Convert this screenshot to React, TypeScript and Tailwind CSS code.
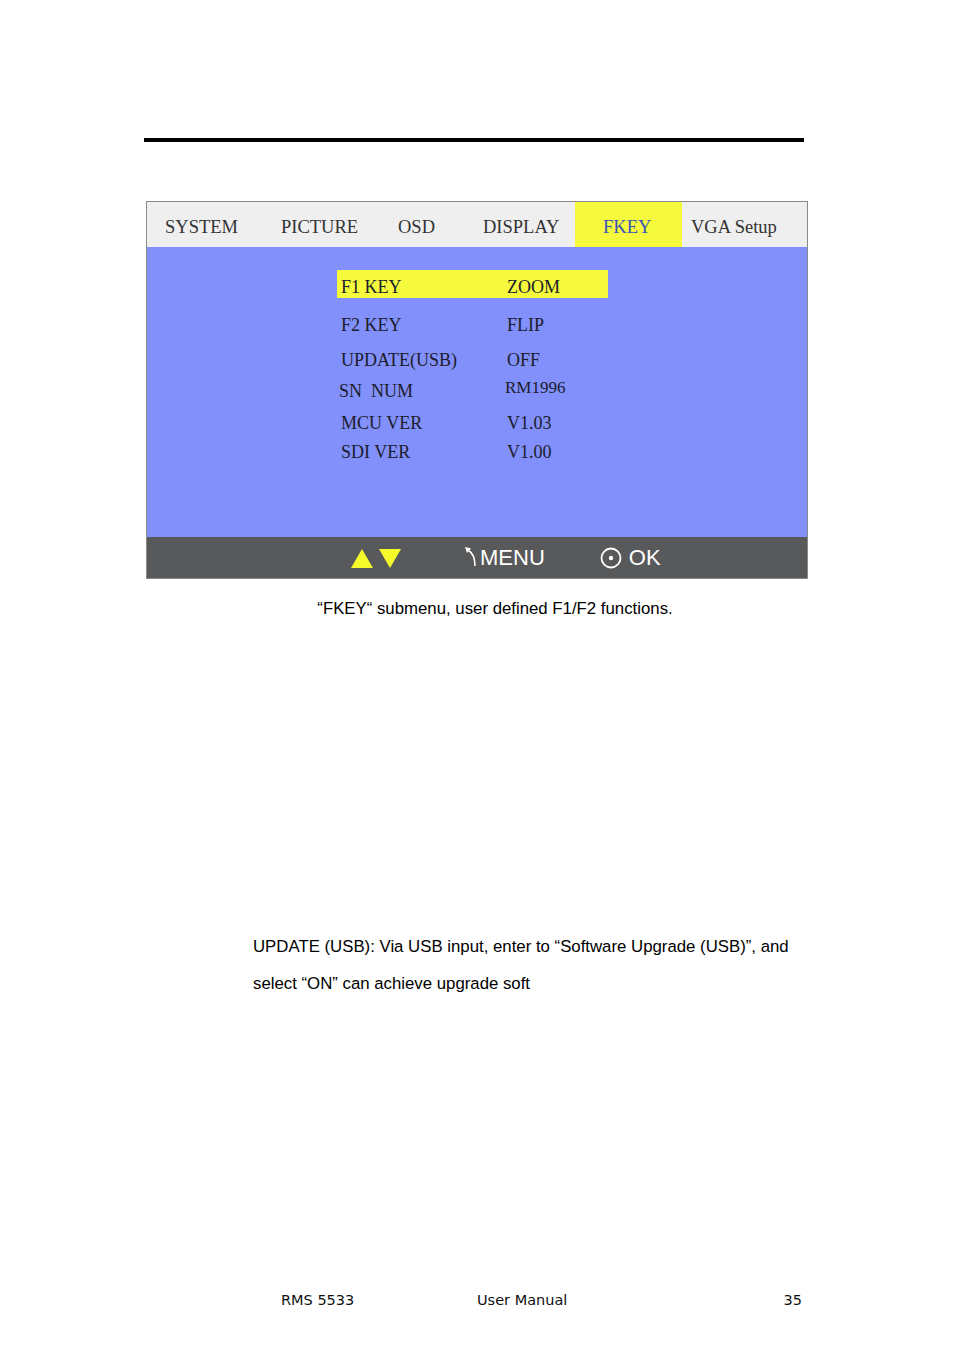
const tabs = [
  { label: 'SYSTEM', w: 'w-[118px]', pad: 'pl-[18px]' },
  { label: 'PICTURE', w: 'w-[119px]', pad: 'pl-[16px]' },
  { label: 'OSD', w: 'w-[82px]', pad: 'pl-[14px]' },
  { label: 'DISPLAY', w: 'w-[109px]', pad: 'pl-[17px]' },
]

const rows = [
  { k: 'F1 KEY', v: 'ZOOM', mt: 'mt-0', active: true },
  { k: 'F2 KEY', v: 'FLIP', mt: 'mt-[10px]' },
  { k: 'UPDATE(USB)', v: 'OFF', mt: 'mt-[7px]' },
  { k: 'SN\u00a0\u00a0NUM', v: 'RM1996', mt: 'mt-[3px]', shift: true },
  { k: 'MCU VER', v: 'V1.03', mt: 'mt-[4px]' },
  { k: 'SDI VER', v: 'V1.00', mt: 'mt-[1px]' },
]

function MenuArrow() {
  return (
    <svg width="14" height="22" viewBox="0 0 14 22" className="mb-[2px]">
      <path d="M11 20 C11 12 9 7 4 4" fill="none" stroke="white" strokeWidth="1.6" />
      <path d="M1 1 L7 2.5 L3 7 Z" fill="white" />
    </svg>
  )
}

function OkIcon() {
  return (
    <svg width="22" height="22" viewBox="0 0 22 22">
      <circle cx="11" cy="11" r="9.5" fill="none" stroke="white" strokeWidth="1.8" />
      <circle cx="11" cy="11" r="2.2" fill="white" />
    </svg>
  )
}

export default function App() {
  return (
    <div className="w-[954px] h-[1350px] bg-white flex flex-col font-['Liberation_Sans',Arial,sans-serif] text-black">
      {/* Top rule */}
      <div className="mt-[138px] ml-[144px] w-[660px] h-[4px] bg-black" />

      {/* OSD screen */}
      <div className="mt-[59px] ml-[146px] w-[662px] h-[378px] border border-[#8a8a8a] flex flex-col font-['Liberation_Serif','Times_New_Roman',serif]">
        <div className="h-[45px] bg-[#efefef] flex text-[18.5px] text-[#333]">
          {tabs.map((t) => (
            <div key={t.label} className={`${t.w} ${t.pad} flex items-center pt-[6px]`}>
              {t.label}
            </div>
          ))}
          <div className="w-[107px] bg-[#f5fb3c] text-[#3a55b8] flex items-center pl-[28px] pt-[6px]">
            FKEY
          </div>
          <div className="flex-1 pl-[9px] flex items-center pt-[6px]">VGA Setup</div>
        </div>

        <div className="h-[290px] bg-[#8190fa] flex flex-col pt-[23px] pl-[190px] text-[18px] text-[#1c1c2c]">
          {rows.map((r) => (
            <div
              key={r.k}
              className={`${r.mt} h-[28px] w-[271px] flex items-center ${r.active ? 'bg-[#f5fb3c]' : ''}`}
            >
              <div className={`w-[168px] ${r.shift ? 'pl-[2px]' : 'pl-[4px]'} pt-[6px]`}>{r.k}</div>
              <div className={`pt-[6px] ${r.shift ? 'text-[17px] -mt-[6px]' : 'pl-[2px]'}`}>{r.v}</div>
            </div>
          ))}
        </div>

        <div className="flex-1 bg-[#58595b] flex items-center pl-[204px] font-['Liberation_Sans',Arial,sans-serif] text-white text-[22px]">
          <div className="w-0 h-0 border-l-[11px] border-r-[11px] border-b-[19px] border-l-transparent border-r-transparent border-b-[#f5fb2a] mt-[2px]" />
          <div className="ml-[6px] w-0 h-0 border-l-[11px] border-r-[11px] border-t-[19px] border-l-transparent border-r-transparent border-t-[#f5fb2a] mt-[2px]" />
          <div className="ml-[63px] flex items-center">
            <MenuArrow />
            <span className="ml-[2px] leading-none">MENU</span>
          </div>
          <div className="ml-[55px] flex items-center">
            <OkIcon />
            <span className="ml-[7px] leading-none">OK</span>
          </div>
        </div>
      </div>

      <p className="mt-[20px] text-center pl-[36px] text-[16.8px] leading-[20px]">
        “FKEY“ submenu, user defined F1/F2 functions.
      </p>

      <div className="mt-[309px] ml-[253px] text-[16.8px] leading-[37px]">
        <p>UPDATE (USB): Via USB input, enter to “Software Upgrade (USB)”, and</p>
        <p>select “ON” can achieve upgrade soft</p>
      </div>

      <div className="mt-[288px] ml-[281px] w-[521px] flex text-[14.5px] font-['DejaVu_Sans',Verdana,sans-serif] text-[#111]">
        <span className="w-[196px]">RMS 5533</span>
        <span className="flex-1">User Manual</span>
        <span>35</span>
      </div>
    </div>
  )
}
